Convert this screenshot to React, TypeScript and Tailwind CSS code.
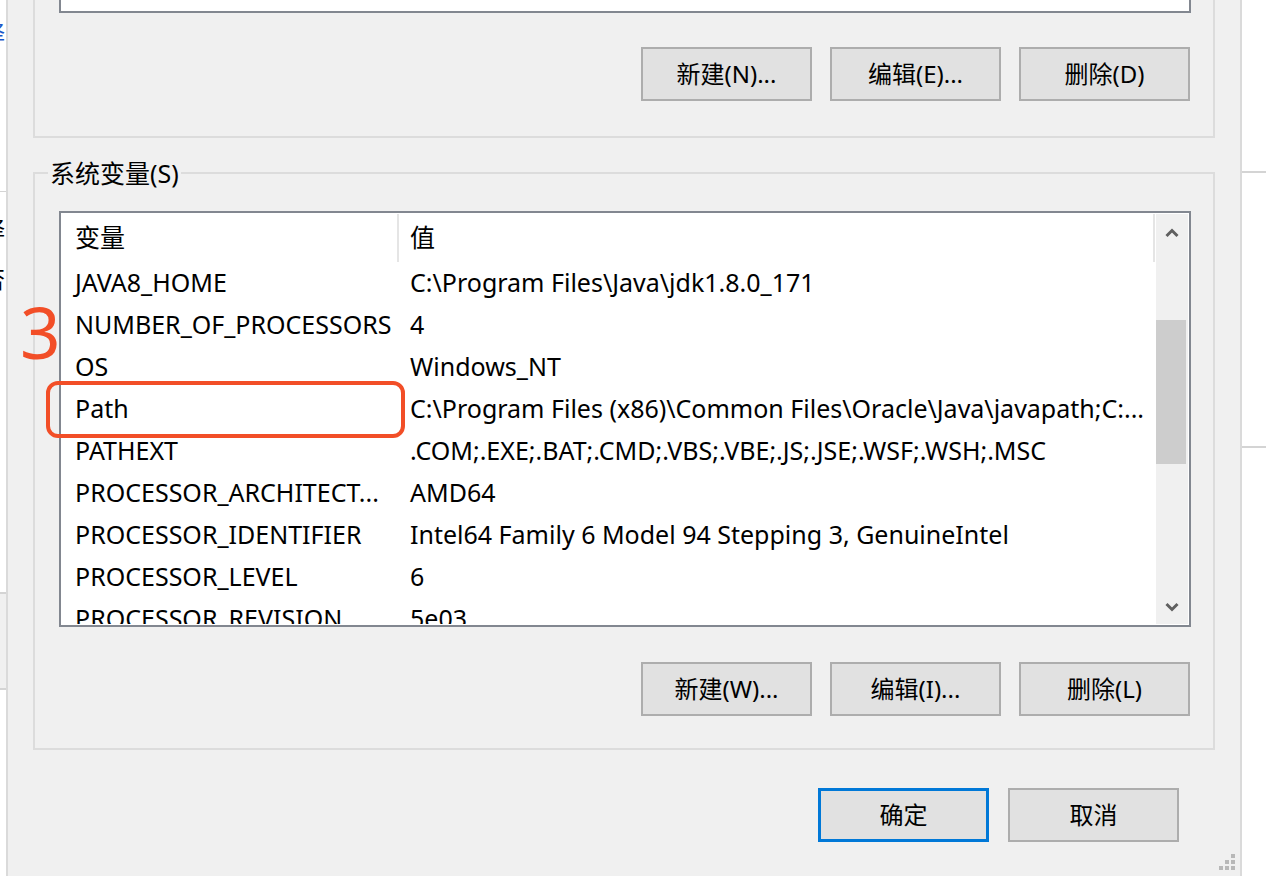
import React from 'react';

const rows: [string, string][] = [
  ['JAVA8_HOME', 'C:\\Program Files\\Java\\jdk1.8.0_171'],
  ['NUMBER_OF_PROCESSORS', '4'],
  ['OS', 'Windows_NT'],
  ['Path', 'C:\\Program Files (x86)\\Common Files\\Oracle\\Java\\javapath;C:...'],
  ['PATHEXT', '.COM;.EXE;.BAT;.CMD;.VBS;.VBE;.JS;.JSE;.WSF;.WSH;.MSC'],
  ['PROCESSOR_ARCHITECT...', 'AMD64'],
  ['PROCESSOR_IDENTIFIER', 'Intel64 Family 6 Model 94 Stepping 3, GenuineIntel'],
  ['PROCESSOR_LEVEL', '6'],
  ['PROCESSOR_REVISION', '5e03'],
];

function Btn({ label, primary }: { label: string; primary?: boolean }) {
  return (
    <button
      className={
        'w-[171px] h-[54px] bg-[#e1e1e1] text-[24px] text-black flex items-center justify-center ' +
        (primary ? 'border-[3px] border-[#0078d7]' : 'border-2 border-[#adadad]')
      }
    >
      {label}
    </button>
  );
}

function Chevron({ down }: { down?: boolean }) {
  return (
    <svg width="14" height="10" viewBox="0 0 14 10">
      <polyline
        points={down ? '1.5,2 7,7.5 12.5,2' : '1.5,8 7,2.5 12.5,8'}
        fill="none"
        stroke="#606060"
        strokeWidth="3"
      />
    </svg>
  );
}

function ScrollBar() {
  return (
    <div className="w-[32px] bg-[#f0f0f0] flex flex-col shrink-0">
      <div className="h-[38px] flex items-center justify-center">
        <Chevron />
      </div>
      <div className="flex-1">
        <div className="mt-[68px] h-[144px] w-[30px] bg-[#cdcdcd]" />
      </div>
      <div className="h-[34px] flex items-center justify-center">
        <Chevron down />
      </div>
    </div>
  );
}

function VarList() {
  return (
    <div className="h-[416px] border-2 border-[#828790] bg-white p-[1px] flex overflow-hidden">
      <div className="flex-1 min-w-0 flex flex-col overflow-hidden pr-[1px]">
        {/* header */}
        <div className="h-[48px] flex shrink-0 text-[25px]">
          <div className="w-[335px] pl-[13px] flex items-center">变量</div>
          <div className="w-[2px] bg-[#e5e5e5]" />
          <div className="flex-1 pl-[11px] flex items-center">值</div>
          <div className="w-[2px] bg-[#e5e5e5]" />
        </div>
        {rows.map(([name, value]) => (
          <div key={name} className="h-[42px] flex shrink-0 items-center text-[25px] whitespace-nowrap">
            <div className="w-[337px] pl-[13px] overflow-hidden">{name}</div>
            <div className="flex-1 pl-[11px] overflow-hidden">{value}</div>
          </div>
        ))}
      </div>
      <ScrollBar />
    </div>
  );
}

function ResizeGrip() {
  const dots = [
    [12, 0],
    [6, 6],
    [12, 6],
    [0, 12],
    [6, 12],
    [12, 12],
  ];
  return (
    <svg width="16" height="16" viewBox="0 0 16 16">
      {dots.map(([x, y]) => (
        <rect key={`${x}-${y}`} x={x} y={y} width="4" height="4" fill="#b8b8b8" />
      ))}
    </svg>
  );
}

export default function App() {
  return (
    <div className="relative w-[1266px] h-[876px] flex overflow-hidden bg-white text-black font-['Noto_Sans','Noto_Sans_CJK_SC',sans-serif]">
      {/* window behind, left edge */}
      <div className="w-[8px] shrink-0 bg-white border-r-2 border-[#dadada] flex flex-col overflow-hidden">
        <div className="h-[192px] border-b border-[#d4d4d4] relative overflow-hidden">
          <div className="mt-[20px] -ml-[18px] text-[23px] text-[#1a56c8] leading-[26px]">择</div>
        </div>
        <div className="h-[24px]" />
        <div className="-ml-[18px] text-[23px] leading-[26px]">择</div>
        <div className="h-[24px]" />
        <div className="-ml-[18px] text-[23px] leading-[26px]">否</div>
        <div className="h-[300px]" />
        <div className="h-[98px] bg-[#f0f0f0] border-y-2 border-[#d4d4d4]" />
      </div>

      {/* dialog */}
      <div className="w-[1232px] shrink-0 bg-[#f0f0f0] px-[25px] flex flex-col">
        {/* user variables (scrolled off top) */}
        <div className="border-2 border-t-0 border-[#dcdcdc] pl-[24px] pr-[22px] pb-[35px]">
          <div className="h-[13px] bg-white border-2 border-t-0 border-[#828790]" />
          <div className="mt-[34px] flex justify-end gap-[18px] pr-[1px]">
            <Btn label="新建(N)..." />
            <Btn label="编辑(E)..." />
            <Btn label="删除(D)" />
          </div>
        </div>

        {/* system variables */}
        <fieldset className="mt-[20px] border-2 border-[#dcdcdc] pl-[24px] pr-[22px] pt-[23px] pb-[32px]">
          <legend className="-ml-[11px] px-[2px] text-[25px] leading-[30px]">系统变量(S)</legend>
          <VarList />
          <div className="mt-[35px] flex justify-end gap-[18px] pr-[1px]">
            <Btn label="新建(W)..." />
            <Btn label="编辑(I)..." />
            <Btn label="删除(L)" />
          </div>
        </fieldset>

        <div className="mt-[38px] flex justify-end gap-[19px] pr-[36px]">
          <Btn label="确定" primary />
          <Btn label="取消" />
        </div>
        <div className="mt-[12px] flex justify-end -mr-[20px]">
          <ResizeGrip />
        </div>
      </div>

      {/* window behind, right edge */}
      <div className="flex-1 bg-white border-l-2 border-[#dadada] flex flex-col">
        <div className="h-[171px]" />
        <div className="h-[2px] bg-[#d4d4d4]" />
        <div className="h-[273px]" />
        <div className="h-[2px] bg-[#d4d4d4]" />
      </div>

      {/* annotation */}
      <div className="absolute left-[20px] top-[296px] text-[71px] leading-[72px] text-[#f24e27]">3</div>
      <div className="absolute left-[46px] top-[381px] w-[359px] h-[57px] border-4 border-[#f24e27] rounded-[12px]" />
    </div>
  );
}
